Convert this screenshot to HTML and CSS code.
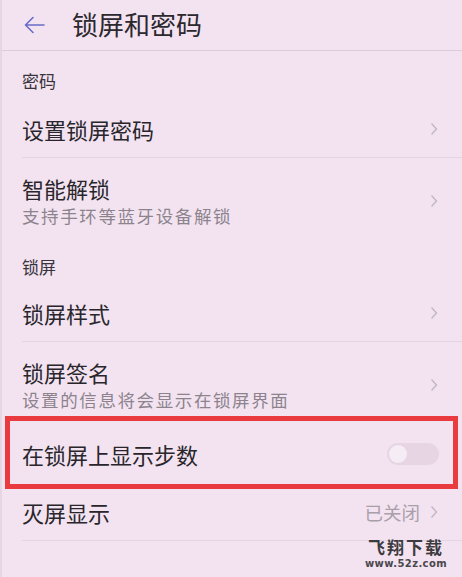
FILE: index.html
```html
<!DOCTYPE html>
<html lang="zh-CN">
<head>
<meta charset="utf-8">
<title>锁屏和密码</title>
<link rel="stylesheet" href="styles.css">
</head>
<body>
<div class="screen">
  <header class="header">
    <svg class="back" width="22" height="18" viewBox="0 0 22 18"><path d="M10 1.5 L2.5 9 L10 16.5 M2.5 9 H21" fill="none" stroke="#6a6cc8" stroke-width="1.6" stroke-linecap="round" stroke-linejoin="round"/></svg>
    <h1 class="title">锁屏和密码</h1>
  </header>

  <div class="sec sec-first">密码</div>
  <div class="row divided">
    <div class="texts"><div class="label">设置锁屏密码</div></div>
    <svg class="chev" width="8" height="14" viewBox="0 0 8 14"><path d="M1.5 1.5 L6.5 7 L1.5 12.5" fill="none" stroke="#c2b8c2" stroke-width="1.4"/></svg>
  </div>
  <div class="row tall">
    <div class="texts"><div class="label">智能解锁</div><div class="sub">支持手环等蓝牙设备解锁</div></div>
    <svg class="chev" width="8" height="14" viewBox="0 0 8 14"><path d="M1.5 1.5 L6.5 7 L1.5 12.5" fill="none" stroke="#c2b8c2" stroke-width="1.4"/></svg>
  </div>

  <div class="sec sec-second">锁屏</div>
  <div class="row divided">
    <div class="texts"><div class="label">锁屏样式</div></div>
    <svg class="chev" width="8" height="14" viewBox="0 0 8 14"><path d="M1.5 1.5 L6.5 7 L1.5 12.5" fill="none" stroke="#c2b8c2" stroke-width="1.4"/></svg>
  </div>
  <div class="row tall sign">
    <div class="texts"><div class="label">锁屏签名</div><div class="sub">设置的信息将会显示在锁屏界面</div></div>
    <svg class="chev" width="8" height="14" viewBox="0 0 8 14"><path d="M1.5 1.5 L6.5 7 L1.5 12.5" fill="none" stroke="#c2b8c2" stroke-width="1.4"/></svg>
  </div>
  <div class="row steps">
    <div class="texts"><div class="label">在锁屏上显示步数</div></div>
    <div class="toggle"><span class="knob"></span></div>
  </div>
  <div class="row divided aod">
    <div class="texts"><div class="label">灭屏显示</div></div>
    <span class="value">已关闭</span>
    <svg class="chev" width="8" height="14" viewBox="0 0 8 14"><path d="M1.5 1.5 L6.5 7 L1.5 12.5" fill="none" stroke="#c2b8c2" stroke-width="1.4"/></svg>
  </div>

  <div class="watermark">
    <div class="wm-big">飞翔下载</div>
    <div class="wm-small">www.52z.com</div>
  </div>
</div>
</body>
</html>
```
FILE: styles.css
```css
html, body {
  margin: 0;
  padding: 0;
}
body {
  background: #f3e3f1;
  font-family: "Noto Sans CJK SC", "Noto Sans", sans-serif;
  color: #2a272c;
}
.screen {
  position: relative;
  width: 462px;
  height: 577px;
  overflow: hidden;
  background: #f3e3f1;
  border-left: 2px solid #e4d6e2;
  box-sizing: border-box;
}
.header {
  height: 50px;
  border-bottom: 1px solid #dccbd9;
  display: flex;
  align-items: center;
  padding-left: 21px;
}
.back {
  display: block;
}
.title {
  margin: 0 0 3px 27px;
  font-size: 26px;
  font-weight: 400;
  line-height: 34px;
  color: #2b282e;
}
.sec {
  font-size: 17px;
  line-height: 20px;
  color: #38343b;
  padding-left: 20px;
}
.sec-first {
  height: 49px;
  box-sizing: border-box;
  padding-top: 20px;
}
.sec-second {
  height: 44px;
  box-sizing: border-box;
  padding-top: 17px;
}
.row {
  display: flex;
  align-items: center;
  padding-left: 20px;
  padding-right: 24px;
  box-sizing: border-box;
}
.row.divided {
  height: 58px;
  position: relative;
}
.row.divided::after {
  content: "";
  position: absolute;
  left: 20px;
  right: 0;
  bottom: 0;
  height: 1px;
  background: #e6d4e3;
}
.row.tall {
  height: 82px;
  padding-top: 3px;
}
.row.sign {
  height: 83px;
}
.texts {
  flex: 1;
}
.label {
  font-size: 22px;
  line-height: 28px;
  color: #29262b;
}
.sub {
  font-size: 17.5px;
  line-height: 24px;
  letter-spacing: 1.6px;
  color: #8c838d;
  margin-top: 2px;
}
.chev {
  display: block;
  flex: none;
}
.steps {
  height: 58px;
  position: relative;
}
.steps::after {
  content: "";
  position: absolute;
  left: 3px;
  right: 4px;
  top: -9px;
  bottom: -6px;
  border: 5px solid #e93a40;
}
.toggle {
  width: 52px;
  height: 22px;
  border-radius: 11px;
  background: #e7d5e4;
  display: flex;
  align-items: center;
  padding-left: 2px;
  box-sizing: border-box;
  margin-right: -1px;
}
.knob {
  width: 18px;
  height: 18px;
  border-radius: 50%;
  background: #f6ecf5;
}
.aod {
  height: 61px;
}
.value {
  font-size: 18.5px;
  color: #a99fa9;
  margin-right: 10px;
}
.watermark {
  position: absolute;
  right: 15px;
  top: 538px;
  display: flex;
  flex-direction: column;
  align-items: center;
  gap: 4px;
  color: #3e3b40;
  white-space: nowrap;
}
.wm-big {
  font-size: 17px;
  font-weight: 700;
  line-height: 17px;
  letter-spacing: 2px;
}
.wm-small {
  font-family: "DejaVu Sans", sans-serif;
  font-size: 10px;
  line-height: 10px;
  letter-spacing: 0.4px;
  font-weight: 700;
  color: #4a474c;
}
```
